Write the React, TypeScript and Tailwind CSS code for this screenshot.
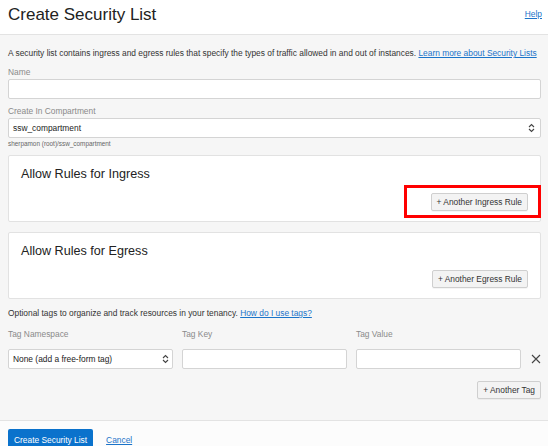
import React from "react";

function UpDown() {
  return (
    <svg width="7" height="10" viewBox="0 0 7 10" fill="none" stroke="#444" strokeWidth="1.1">
      <path d="M1 4 L3.5 1.5 L6 4" />
      <path d="M1 6 L3.5 8.5 L6 6" />
    </svg>
  );
}

function Label({ children }: { children: React.ReactNode }) {
  return <div className="text-[8.4px] leading-[12px] text-[#8a8a8a]">{children}</div>;
}

function Btn({ children }: { children: React.ReactNode }) {
  return (
    <button className="block h-[18px] px-[5px] text-[8.4px] leading-none text-[#333] bg-[#f3f3f3] border border-[#cfcfcf] rounded-[2px] shadow-[0_1px_0_rgba(0,0,0,0.04)]">
      {children}
    </button>
  );
}

function Panel({ title, btn, marked }: { title: string; btn: string; marked?: boolean }) {
  return (
    <div className="bg-white border border-[#e2e2e2] rounded-[2px] pt-[10px] pb-[10px] pl-[12px] pr-[12px] flex flex-col">
      <div className="text-[12.6px] leading-[16px] text-[#222]">{title}</div>
      <div className="mt-[11px] flex justify-end">
        <div className="relative flex">
          <Btn>{btn}</Btn>
          {marked && (
            <div className="absolute left-[-27px] right-[-13px] top-[-8px] bottom-[-7px] border-[3px] border-[#ff0000]" />
          )}
        </div>
      </div>
    </div>
  );
}

export default function App() {
  return (
    <div className="w-[548px] h-[446px] overflow-hidden flex flex-col bg-[#f6f6f6] font-['Liberation_Sans',Arial,sans-serif] text-[#333]">
      <header className="h-[35px] shrink-0 bg-white border-b border-[#e3e3e3] flex items-start justify-between pl-[8px] pr-[6px]">
        <h1 className="pt-[5px] text-[17px] leading-[20px] text-[#222]">Create Security List</h1>
        <a className="pt-[8px] text-[8.4px] leading-[12px] text-[#1b74c9] underline">Help</a>
      </header>

      <main className="flex-1 pl-[8px] pr-[7px] pt-[12px] flex flex-col">
        <p className="text-[8.4px] leading-[12px] text-[#333] whitespace-nowrap">
          A security list contains ingress and egress rules that specify the types of traffic allowed in and out of instances.{" "}
          <a className="text-[#1b74c9] underline">Learn more about Security Lists</a>
        </p>

        <div className="mt-[7px]">
          <Label>Name</Label>
          <div className="mt-[1px] h-[20px] bg-white border border-[#d4d4d4] rounded-[2px]" />
        </div>

        <div className="mt-[6px]">
          <Label>Create In Compartment</Label>
          <div className="mt-[1px] h-[20px] bg-white border border-[#d4d4d4] rounded-[2px] flex items-center justify-between pl-[4px] pr-[5px]">
            <span className="text-[8.4px] leading-none text-[#222]">ssw_compartment</span>
            <UpDown />
          </div>
          <div className="mt-[1px] text-[6.4px] leading-[10px] text-[#666]">sherpamon (root)/ssw_compartment</div>
        </div>

        <div className="mt-[6px]">
          <Panel title="Allow Rules for Ingress" btn="+ Another Ingress Rule" marked />
        </div>
        <div className="mt-[10px]">
          <Panel title="Allow Rules for Egress" btn="+ Another Egress Rule" />
        </div>

        <p className="mt-[8px] text-[8.4px] leading-[12px] text-[#333]">
          Optional tags to organize and track resources in your tenancy.{" "}
          <a className="text-[#1b74c9] underline">How do I use tags?</a>
        </p>

        <div className="mt-[9px] grid grid-cols-[165px_165px_165px_20px] gap-x-[9px]">
          <Label>Tag Namespace</Label>
          <Label>Tag Key</Label>
          <Label>Tag Value</Label>
          <div />
        </div>
        <div className="mt-[9px] flex items-center">
          <div className="w-[165px] h-[20px] bg-white border border-[#d4d4d4] rounded-[2px] flex items-center justify-between pl-[4px] pr-[3px]">
            <span className="text-[8.4px] leading-none text-[#222]">None (add a free-form tag)</span>
            <UpDown />
          </div>
          <div className="ml-[9px] w-[165px] h-[20px] bg-white border border-[#d4d4d4] rounded-[2px]" />
          <div className="ml-[9px] w-[165px] h-[20px] bg-white border border-[#d4d4d4] rounded-[2px]" />
          <svg className="ml-[10px]" width="10" height="10" viewBox="0 0 10 10" stroke="#444" strokeWidth="1.1">
            <path d="M1 1 L9 9 M9 1 L1 9" />
          </svg>
        </div>
        <div className="mt-[12px] flex justify-end">
          <Btn>+ Another Tag</Btn>
        </div>
      </main>

      <footer className="h-[26px] shrink-0 bg-[#fcfcfc] border-t border-[#e3e3e3] pl-[8px] pt-[8px] flex items-start gap-[13px]">
        <button className="h-[22px] px-[6px] bg-[#0a72cc] text-white text-[8.4px] leading-none rounded-[2px]">Create Security List</button>
        <a className="pt-[5px] text-[8.4px] leading-[12px] text-[#1b74c9] underline">Cancel</a>
      </footer>
    </div>
  );
}
